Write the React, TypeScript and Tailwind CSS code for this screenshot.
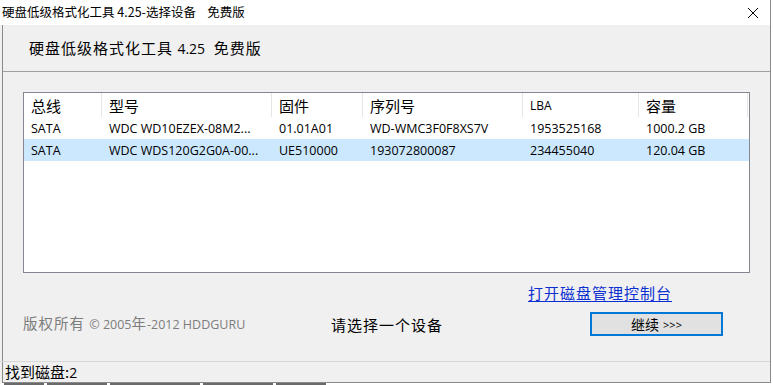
import React from 'react';

const cjk = { fontFamily: '"Noto Sans CJK SC", "Noto Sans", sans-serif' };
const ui = { fontFamily: '"Open Sans", "Noto Sans CJK SC", sans-serif' };

const columns = [
  { title: '总线', width: 'w-[78px]', latin: false },
  { title: '型号', width: 'w-[170px]', latin: false },
  { title: '固件', width: 'w-[91px]', latin: false },
  { title: '序列号', width: 'w-[160px]', latin: false },
  { title: 'LBA', width: 'w-[116px]', latin: true },
  { title: '容量', width: 'w-[109px]', latin: false },
];

const disks = [
  ['SATA', 'WDC WD10EZEX-08M2...', '01.01A01', 'WD-WMC3F0F8XS7V', '1953525168', '1000.2 GB'],
  ['SATA', 'WDC WDS120G2G0A-00...', 'UE510000', '193072800087', '234455040', '120.04 GB'],
];

export default function App() {
  return (
    <div className="w-[773px] h-[385px] bg-white overflow-hidden flex flex-col">
      <div className="flex h-[383px]">
        {/* strip of the window behind */}
        <div className="w-[2px] bg-[#f0f0f0]" />

        {/* dialog */}
        <div className="w-[769px] flex flex-col border-r border-b border-l border-[#8a8a8a] bg-[#f0f0f0]">
          {/* title bar */}
          <div className="h-[25px] bg-white flex items-center justify-between pl-[2px] pr-[11px] -ml-[3px]">
            <span className="text-[12.5px] text-black leading-none" style={cjk}>
              硬盘低级格式化工具 4.25-选择设备&nbsp;&nbsp;&nbsp;&nbsp;免费版
            </span>
            <svg width="12" height="12" viewBox="0 0 12 12" className="text-black">
              <path d="M1 1 L11 11 M11 1 L1 11" stroke="currentColor" strokeWidth="1" />
            </svg>
          </div>

          {/* header */}
          <div className="h-[47px] border-b border-[#a0a0a0] flex items-center pl-[26px]">
            <span className="text-[15px] tracking-[1px] text-black leading-none" style={cjk}>
              硬盘低级格式化工具 <span className="tracking-normal text-[14px]" style={ui}>4.25</span>&nbsp;&nbsp;免费版
            </span>
          </div>

          {/* body */}
          <div className="flex-1 flex flex-col pl-[20px] pt-[20px]">
            <div className="w-[727px] h-[181px] border border-[#828790] bg-white flex flex-col">
              <div className="flex h-[24px]">
                {columns.map((c) => (
                  <div
                    key={c.title}
                    className={`${c.width} h-full flex items-center pl-[7px] border-r border-[#e5e5e5] text-black leading-none ${
                      c.latin ? 'text-[12px] pt-[2px]' : 'text-[15px]'
                    }`}
                    style={c.latin ? ui : cjk}
                  >
                    {c.title}
                  </div>
                ))}
              </div>
              {disks.map((row, i) => (
                <div key={i} className={`flex h-[22px] ${i === 1 ? 'bg-[#cce8ff]' : ''}`}>
                  {row.map((cell, j) => (
                    <div
                      key={j}
                      className={`${columns[j].width} flex items-center pl-[7px] pt-[2px] text-[12.5px] text-black leading-none whitespace-nowrap overflow-hidden`}
                      style={ui}
                    >
                      {cell}
                    </div>
                  ))}
                </div>
              ))}
            </div>

            <div className="h-[38px] flex items-center pl-[505px]">
              <a
                href="#"
                className="text-[15px] tracking-[1px] text-[#0a2fd0] underline underline-offset-2 leading-none"
                style={cjk}
              >
                打开磁盘管理控制台
              </a>
            </div>

            <div className="flex items-center h-[26px]">
              <div className="w-[308px] text-[14.5px] tracking-[1px] text-[#7d7d7d] leading-none whitespace-nowrap" style={cjk}>
                版权所有 <span className="text-[12.5px] tracking-normal" style={ui}>© 2005</span>年
                <span className="text-[12.5px] tracking-normal" style={ui}>-2012 HDDGURU</span>
              </div>
              <div className="w-[259px] text-[15px] tracking-[1px] text-black leading-none" style={cjk}>
                请选择一个设备
              </div>
              <button className="w-[133px] h-[24px] border-2 border-[#0078d7] bg-[#e1e1e1] flex items-center justify-center gap-[4px] leading-none">
                <span className="text-[14px] text-black" style={cjk}>继续</span>
                <span className="text-[11px] text-black" style={ui}>&gt;&gt;&gt;</span>
              </button>
            </div>
          </div>

          {/* status bar */}
          <div className="h-[21px] border-t border-[#d7d7d7] flex items-center -ml-[3px] pl-[5px]">
            <span className="text-[15px] text-black leading-none" style={cjk}>
              找到磁盘:<span className="text-[14px]" style={ui}>2</span>
            </span>
          </div>
        </div>

        <div className="w-[2px] bg-white" />
      </div>

      {/* window behind, only its text tops peek out */}
      <div className="h-[2px] bg-white flex items-start gap-[3px] pl-[4px]">
        <div className="w-[40px] h-[2px] bg-[#6a6a6a]" />
        <div className="w-[60px] h-[2px] bg-[#6a6a6a]" />
        <div className="w-[90px] h-[2px] bg-[#6a6a6a]" />
        <div className="w-[70px] h-[2px] bg-[#6a6a6a]" />
        <div className="w-[50px] h-[2px] bg-[#6a6a6a]" />
      </div>
    </div>
  );
}
